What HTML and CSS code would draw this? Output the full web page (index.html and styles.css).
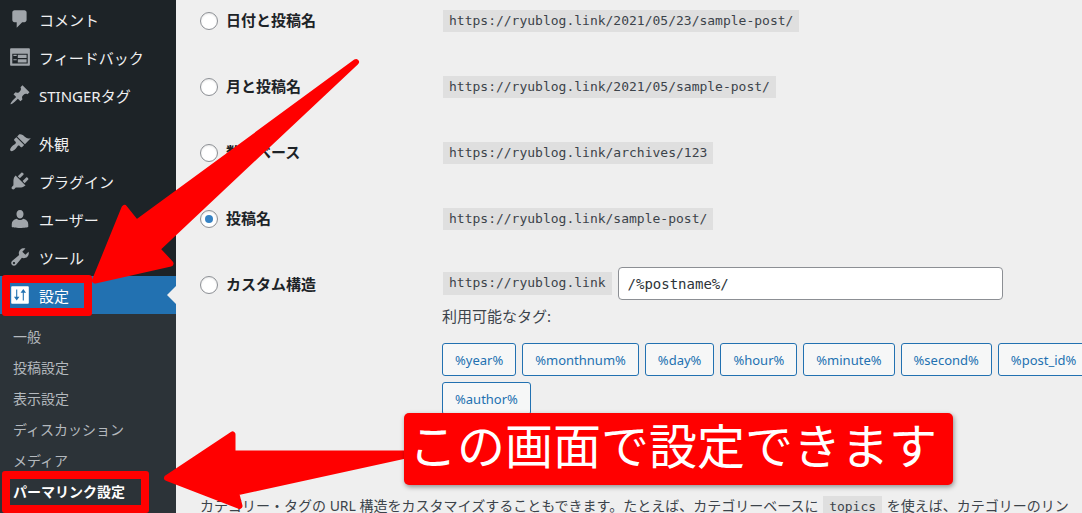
FILE: index.html
```html
<!DOCTYPE html>
<html lang="ja">
<head>
    <meta charset="UTF-8">
    <meta name="viewport" content="width=device-width, initial-scale=1.0">
    <title>パーマリンク設定</title>
    <link rel="stylesheet" href="styles.css">
</head>
<body>
    <nav class="sidebar">
        <ul class="menu">
            <li><a class="menu-link" href="#">
                <svg class="icon" viewBox="0 0 20 20"><path d="M5 2h9c1.1 0 2 .9 2 2v7c0 1.1-.9 2-2 2h-2l-5 5v-5H5c-1.1 0-2-.9-2-2V4c0-1.1.9-2 2-2z"/></svg>
                コメント</a></li>
            <li><a class="menu-link" href="#">
                <svg class="icon" viewBox="0 0 20 20"><path d="M2 2h16c.55 0 1 .45 1 1v14c0 .55-.45 1-1 1H2c-.55 0-1-.45-1-1V3c0-.55.45-1 1-1zm15 14V7H3v9h14zM4 8v1h3V8H4zm4 0v3h8V8H8zm-4 4v1h3v-1H4zm4 0v3h8v-3H8z"/></svg>
                フィードバック</a></li>
            <li><a class="menu-link" href="#">
                <svg class="icon" viewBox="0 0 20 20"><path d="M10.44 3.02l1.82-1.82 6.36 6.35-1.83 1.82c-1.05-.68-2.48-.57-3.41.36l-.75.75c-.92.93-1.04 2.35-.35 3.41l-1.83 1.82-2.41-2.41-2.8 2.79c-.42.42-3.38 2.71-3.8 2.29s1.86-3.39 2.28-3.81l2.79-2.79L4.1 9.36l1.83-1.82c1.05.69 2.48.57 3.4-.36l.75-.75c.93-.92 1.05-2.35.36-3.41z"/></svg>
                STINGERタグ</a></li>
            <li class="separator"></li>
            <li><a class="menu-link" href="#">
                <svg class="icon" viewBox="0 0 20 20"><path d="M14.48 11.06L7.41 3.99l1.5-1.5c.5-.56 2.3-.47 3.51.32 1.21.8 1.43 1.28 2.91 2.1 1.18.64 2.45 1.26 4.45.85zm-.71.71L6.7 4.7 4.93 6.47c-.39.39-.39 1.02 0 1.41l1.06 1.06c.39.39.39 1.03 0 1.42-.6.6-1.43 1.11-2.21 1.69-.35.26-.7.53-1.01.84C1.43 14.23.4 16.08 1.4 17.07c.99 1 2.84-.03 4.18-1.36.31-.31.58-.66.85-1.02.57-.78 1.08-1.61 1.69-2.21.39-.39 1.02-.39 1.41 0l1.06 1.06c.39.39 1.02.39 1.41 0z"/></svg>
                外観</a></li>
            <li><a class="menu-link" href="#">
                <svg class="icon" viewBox="0 0 20 20"><path d="M13.11 4.36L9.87 7.6 8 5.73l3.24-3.24c.35-.34 1.05-.2 1.56.32.52.51.66 1.21.31 1.55zm-8 1.77l.91-1.12 9.01 9.01-1.19.84c-.71.71-2.63 1.16-3.82 1.16H6.14L4.9 17.26c-.59.59-1.54.59-2.12 0-.59-.58-.59-1.53 0-2.12l1.24-1.24v-3.88c0-1.13.4-3.19 1.09-3.89zm7.26 3.97l3.24-3.24c.34-.35 1.04-.21 1.55.31.52.51.66 1.21.31 1.55l-3.24 3.25z"/></svg>
                プラグイン</a></li>
            <li><a class="menu-link" href="#">
                <svg class="icon" viewBox="0 0 20 20"><path d="M10 9.5c-2.3 0-3.2-2-3.2-4S7.9 1.8 10 1.8s3.2 1.7 3.2 3.7-.9 4-3.2 4zM7 9.8c.9.8 1.9 1.1 3 1.1s2.100-.3 3-1.100c2.900.5 4.500 2.600 4.500 4.900v2.400c0 .500-3.700 1.100-7.500 1.100s-7.500-.6-7.500-1.100v-2.400c0-2.300 1.600-4.400 4.500-4.900z"/></svg>
                ユーザー</a></li>
            <li><a class="menu-link" href="#">
                <svg class="icon" viewBox="0 0 20 20"><path d="M16.68 9.77c-1.34 1.34-3.3 1.67-4.95.99l-5.41 6.52c-.99.99-2.59.99-3.58 0s-.99-2.59 0-3.57l6.52-5.42c-.68-1.65-.35-3.61.99-4.95 1.28-1.28 3.12-1.62 4.72-1.06l-2.89 2.89 2.82 2.82 2.86-2.87c.53 1.58.18 3.39-1.08 4.65zM3.81 16.21c.4.39 1.04.39 1.43 0 .4-.4.4-1.04 0-1.43-.39-.4-1.03-.4-1.43 0-.39.39-.39 1.03 0 1.43z"/></svg>
                ツール</a></li>
            <li><a class="menu-link current" href="#">
                <svg class="icon" viewBox="0 0 20 20"><path fill-rule="evenodd" d="M3 2h14c.6 0 1 .4 1 1v14c0 .6-.4 1-1 1H3c-.6 0-1-.4-1-1V3c0-.6.4-1 1-1zM6.500 5v6.500H4.500L7 15l2.500-3.500H7.500V5zM13 4.500L10.500 8h2v7h1V8h2z"/></svg>
                設定</a>
                <ul class="submenu">
                    <li><a href="#">一般</a></li>
                    <li><a href="#">投稿設定</a></li>
                    <li><a href="#">表示設定</a></li>
                    <li><a href="#">ディスカッション</a></li>
                    <li><a href="#">メディア</a></li>
                    <li><a class="selected" href="#">パーマリンク設定</a></li>
                </ul>
            </li>
        </ul>
    </nav>

    <main class="content">
        <form class="permalinks">
            <div class="row">
                <label class="choice"><input type="radio" name="selection"> 日付と投稿名</label>
                <div><code>https://ryublog.link/2021/05/23/sample-post/</code></div>
            </div>
            <div class="row">
                <label class="choice"><input type="radio" name="selection"> 月と投稿名</label>
                <div><code>https://ryublog.link/2021/05/sample-post/</code></div>
            </div>
            <div class="row">
                <label class="choice"><input type="radio" name="selection"> 数字ベース</label>
                <div><code>https://ryublog.link/archives/123</code></div>
            </div>
            <div class="row">
                <label class="choice"><input type="radio" name="selection" checked> 投稿名</label>
                <div><code>https://ryublog.link/sample-post/</code></div>
            </div>
            <div class="row">
                <label class="choice"><input type="radio" name="selection"> カスタム構造</label>
                <div class="custom">
                    <div class="structure">
                        <code>https://ryublog.link</code>
                        <input class="structure-input" type="text" value="/%postname%/" aria-label="カスタム構造">
                    </div>
                    <p class="tags-title">利用可能なタグ:</p>
                    <div class="tags">
                        <button type="button">%year%</button>
                        <button type="button">%monthnum%</button>
                        <button type="button">%day%</button>
                        <button type="button">%hour%</button>
                        <button type="button">%minute%</button>
                        <button type="button">%second%</button>
                        <button type="button">%post_id%</button>
                        <button type="button">%author%</button>
                    </div>
                </div>
            </div>
        </form>
        <p class="note">カテゴリー・タグの URL 構造をカスタマイズすることもできます。たとえば、カテゴリーベースに <code>topics</code> を使えば、カテゴリーのリン</p>
    </main>

    <!-- annotations over the screen -->
    <svg class="arrows" width="1082" height="513" viewBox="0 0 1082 513">
        <path d="M356 62L136.5 223 124.5 208 95 280.5 170.5 263.5 157 249z"/>
        <path d="M167 478L232.5 434.5V453.5H410V454.5L236 492.5 239.5 506z"/>
    </svg>
    <div class="frame frame-settings"></div>
    <div class="frame frame-permalink"></div>
    <div class="callout">この画面で設定できます</div>
</body>
</html>
```
FILE: styles.css
```css
* {
    box-sizing: border-box;
}

body {
    display: flex;
    position: relative;
    height: 100vh;
    margin: 0;
    overflow: hidden;
    background: #efefef;
    color: #3c434a;
    font-family: "Noto Sans", "Noto Sans CJK JP", sans-serif;
    font-size: 15px;
}

ul {
    list-style: none;
    margin: 0;
    padding: 0;
}

p {
    margin: 0;
}

a {
    text-decoration: none;
}

/* sidebar */
.sidebar {
    flex: 0 0 176px;
    background: #1d2327;
}

.menu-link {
    display: flex;
    align-items: center;
    gap: 8px;
    height: 38px;
    padding-left: 9px;
    color: #f0f0f1;
}

.icon {
    width: 22px;
    height: 22px;
    fill: #a0a5aa;
}

.separator {
    height: 10px;
}

.menu-link.current {
    position: relative;
    background: #2271b1;
    color: #fff;
}

.menu-link.current .icon {
    fill: #fff;
}

.menu-link.current::after {
    content: "";
    position: absolute;
    right: 0;
    top: 10px;
    border: 9px solid transparent;
    border-left: 0;
    border-right-color: #efefef;
}

.submenu {
    padding: 7px 0 8px;
    background: #2c3338;
}

.submenu a {
    display: block;
    padding-left: 13px;
    color: #b4b9be;
    font-size: 14px;
    line-height: 31px;
}

.submenu .selected {
    color: #fff;
    font-weight: bold;
}

/* settings form */
.content {
    flex: 1;
    min-width: 0;
    padding: 3px 0 0 24px;
}

.permalinks {
    display: flex;
    flex-direction: column;
    gap: 31px;
    margin-right: -40px;
}

.row {
    display: grid;
    grid-template-columns: 242px 1fr;
    line-height: 33px;
}

.choice {
    display: flex;
    align-items: center;
    gap: 8px;
    height: 35px;
    color: #1d2327;
    font-weight: bold;
}

input[type="radio"] {
    appearance: none;
    display: grid;
    place-items: center;
    width: 18px;
    height: 18px;
    margin: 0;
    border: 1px solid #8c8f94;
    border-radius: 50%;
    background: #fff;
    box-shadow: inset 0 1px 2px rgba(0, 0, 0, 0.1);
}

input[type="radio"]:checked::before {
    content: "";
    width: 8px;
    height: 8px;
    border-radius: 50%;
    background: #3582c4;
}

code {
    margin: 0 1px;
    padding: 3px 6px 4px;
    background: #dfdfdf;
    font-family: "DejaVu Sans Mono", monospace;
    font-size: 13px;
}

.structure {
    display: flex;
    align-items: center;
    gap: 5px;
    line-height: 16px;
}

.structure-input {
    width: 385px;
    height: 33px;
    padding: 0 9px;
    border: 1px solid #8c8f94;
    border-radius: 4px;
    background: #fff;
    color: #2c3338;
    font-family: "DejaVu Sans Mono", monospace;
    font-size: 14px;
}

.tags-title {
    margin-bottom: 10px;
}

.tags {
    display: flex;
    flex-wrap: wrap;
    gap: 6px;
}

.tags button {
    height: 33px;
    padding: 0 12px;
    border: 1px solid #2271b1;
    border-radius: 3px;
    background: #f6f7f7;
    color: #2271b1;
    font-family: inherit;
    font-size: 13px;
}

.note {
    margin-top: 80px;
    font-size: 14px;
    line-height: 22px;
    white-space: nowrap;
}

/* annotations */
.arrows {
    position: absolute;
    top: 0;
    left: 0;
    fill: #f00;
    stroke: #f00;
    stroke-width: 6;
    stroke-linejoin: round;
    pointer-events: none;
}

.frame {
    position: absolute;
    left: 2px;
    border: 8px solid #f00;
    border-radius: 3px;
    pointer-events: none;
}

.frame-settings {
    top: 275px;
    width: 90px;
    height: 41px;
}

.frame-permalink {
    top: 471px;
    width: 147px;
    height: 42px;
}

.callout {
    position: absolute;
    top: 413px;
    left: 404px;
    padding: 0 16px 6px 5px;
    border-radius: 5px;
    background: #f00;
    box-shadow: 1px 2px 5px rgba(0, 0, 0, 0.4);
    color: #fff;
    font-size: 48px;
    line-height: 66px;
    white-space: nowrap;
}
```
